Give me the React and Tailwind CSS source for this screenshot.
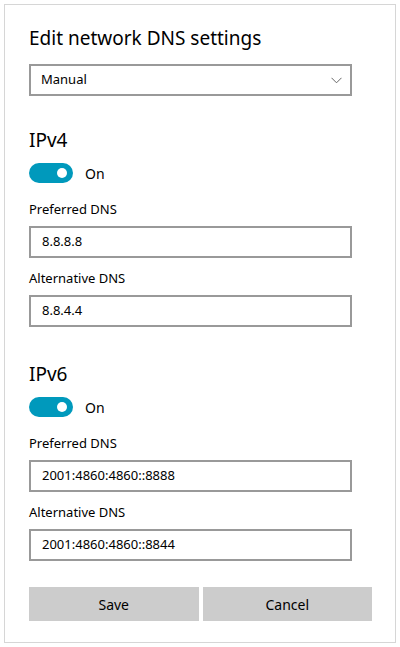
import React from "react";

function Toggle() {
  return (
    <div className="flex items-center gap-3 h-[20px]">
      <div className="w-[44px] h-[20px] rounded-full bg-[#0099bc] flex items-center justify-end pr-[6px]">
        <div className="w-[10px] h-[10px] rounded-full bg-white" />
      </div>
      <span className="text-[14px] text-black">On</span>
    </div>
  );
}

function Field({ label, value }) {
  return (
    <div>
      <div className="text-[13px] leading-[20px] text-black">{label}</div>
      <div className="mt-[7px] w-[323px] h-[32px] border-2 border-[#999999] flex items-center px-[11px] text-[13px] text-black">
        {value}
      </div>
    </div>
  );
}

function Section({ title, pref, alt }) {
  return (
    <div>
      <h2 className="text-[19px] leading-[28px] text-black">{title}</h2>
      <div className="mt-[9px]">
        <Toggle />
      </div>
      <div className="mt-[16px] flex flex-col gap-[10px]">
        <Field label="Preferred DNS" value={pref} />
        <Field label="Alternative DNS" value={alt} />
      </div>
    </div>
  );
}

export default function App() {
  return (
    <div className="w-[400px] h-[647px] bg-white p-[4px]" style={{ fontFamily: '"Noto Sans", sans-serif' }}>
      <div className="h-full border border-[#d6d6d6] pl-[24px] pt-[19px]">
        <h1 className="text-[19px] leading-[28px] text-black">Edit network DNS settings</h1>
        <div className="mt-[12px] w-[323px] h-[32px] border-2 border-[#999999] flex items-center justify-between pl-[10px] pr-[8px] text-[13px] text-black">
          <span>Manual</span>
          <svg width="11" height="7" viewBox="0 0 11 7" fill="none" stroke="#666" strokeWidth="1">
            <path d="M0.5 0.8 L5.5 5.8 L10.5 0.8" />
          </svg>
        </div>
        <div className="mt-[30px]">
          <Section title="IPv4" pref="8.8.8.8" alt="8.8.4.4" />
        </div>
        <div className="mt-[33px]">
          <Section title="IPv6" pref="2001:4860:4860::8888" alt="2001:4860:4860::8844" />
        </div>
        <div className="mt-[26px] flex gap-[4px] w-[343px]">
          <button className="flex-1 h-[34px] bg-[#cccccc] text-[14px] text-black">Save</button>
          <button className="flex-1 h-[34px] bg-[#cccccc] text-[14px] text-black">Cancel</button>
        </div>
      </div>
    </div>
  );
}
